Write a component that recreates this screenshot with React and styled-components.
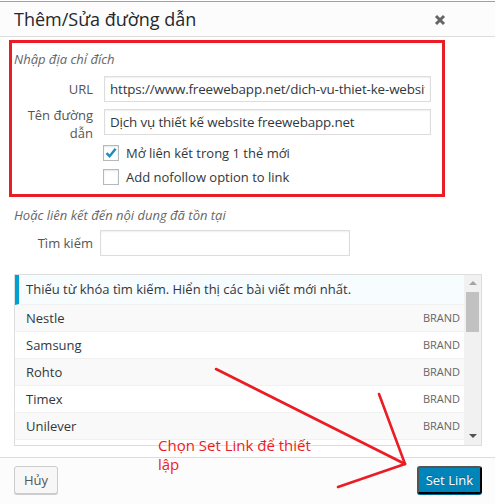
import React from 'react';
import styled, { createGlobalStyle } from 'styled-components';

const GlobalStyle = createGlobalStyle`
  html, body { margin: 0; padding: 0; background: #fff; }
  body { font-family: "Open Sans", "Noto Sans", sans-serif; color: #32373c; }
  * { box-sizing: border-box; }
`;

const links = [
  { title: 'Nestle', info: 'Brand' },
  { title: 'Samsung', info: 'Brand' },
  { title: 'Rohto', info: 'Brand' },
  { title: 'Timex', info: 'Brand' },
  { title: 'Unilever', info: 'Brand' },
  { title: '', info: '' },
];

function App() {
  return (
    <>
      <GlobalStyle />
      <Modal>
        <Header>
          <Title>Thêm/Sửa đường dẫn</Title>
          <CloseBtn aria-label="Close">
            <svg width="12" height="12" viewBox="0 0 12 12">
              <path d="M2 2 L10 10 M10 2 L2 10" stroke="#666" strokeWidth="3" strokeLinecap="butt" />
            </svg>
          </CloseBtn>
        </Header>

        <Body>
          <Highlight>
            <Hint>Nhập địa chỉ đích</Hint>
            <Field>
              <Label>URL</Label>
              <TextInput readOnly value="https://www.freewebapp.net/dich-vu-thiet-ke-website" />
            </Field>
            <Field $tall>
              <Label $wrap>Tên đường<br />dẫn</Label>
              <TextInput readOnly value="Dịch vụ thiết kế website freewebapp.net" />
            </Field>
            <CheckRow $first>
              <Box>
                <svg width="14" height="14" viewBox="0 0 14 14">
                  <path d="M2.5 7.2 L5.6 10.2 L11.6 2.8" fill="none" stroke="#1e8cbe" strokeWidth="2.4" />
                </svg>
              </Box>
              Mở liên kết trong 1 thẻ mới
            </CheckRow>
            <CheckRow>
              <Box />
              Add nofollow option to link
            </CheckRow>
          </Highlight>

          <Hint $outside>Hoặc liên kết đến nội dung đã tồn tại</Hint>
          <SearchField>
            <Label>Tìm kiếm</Label>
            <SearchInput />
          </SearchField>

          <Results>
            <ResultList>
              <Notice>Thiếu từ khóa tìm kiếm. Hiển thị các bài viết mới nhất.</Notice>
              {links.map((l, i) => (
                <Item key={i} $alt={i % 2 === 0}>
                  <span>{l.title}</span>
                  <ItemInfo>{l.info}</ItemInfo>
                </Item>
              ))}
            </ResultList>
            <Scrollbar>
              <Arrow $up />
              <Track>
                <Thumb />
              </Track>
              <Arrow />
            </Scrollbar>
          </Results>
        </Body>

        <Footer>
          <Button>Hủy</Button>
          <Button primary>Set Link</Button>
        </Footer>

        <Note>Chọn Set Link để thiết lập</Note>
        <Marks width="495" height="504" viewBox="0 0 495 504">
          <g stroke="#ea1c24" strokeWidth="2.6" strokeLinecap="round" fill="none">
            <path d="M216 368 L405 463" />
            <path d="M379 393 L405 463" />
            <path d="M405 463 L338 486" />
          </g>
        </Marks>
      </Modal>
    </>
  );
}

const Modal = styled.div`
  position: relative;
  width: 495px;
  height: 504px;
  display: flex;
  flex-direction: column;
  border-top: 1px solid #fff;
  overflow: hidden;
`;

const Header = styled.div`
  height: 36px;
  display: flex;
  align-items: center;
  justify-content: space-between;
  padding: 0 49px 0 14px;
  background: #fcfcfc;
  border-top: 1px solid #7ea6dd;
  border-bottom: 1px solid #ddd;
`;

const Title = styled.h1`
  margin: 0;
  font-size: 18px;
  font-weight: 500;
  color: #23282d;
`;

const CloseBtn = styled.span`
  display: flex;
  margin-top: 2px;
`;

const Body = styled.div`
  flex: 1;
  padding: 3px 13px 0 9px;
  display: flex;
  flex-direction: column;
`;

const Highlight = styled.div`
  width: 436px;
  height: 157px;
  border: 3px solid #ea1c24;
  padding: 7px 0 0 2px;
`;

const Hint = styled.div`
  font-size: 13px;
  font-style: italic;
  color: #666;
  line-height: 18px;
  margin: ${p => (p.$outside ? '9px 0 0 5px' : '0 0 8px')};
`;

const Field = styled.div`
  display: grid;
  grid-template-columns: 81px 327px;
  column-gap: 11px;
  align-items: ${p => (p.$tall ? 'start' : 'center')};
  margin: 0 0 7px -2px;
`;

const Label = styled.label`
  text-align: right;
  font-size: 13px;
  line-height: 18px;
  color: #555;
  margin: ${p => (p.$wrap ? '-3px 0 -10px' : '0')};
`;

const TextInput = styled.input`
  height: 26px;
  width: 100%;
  border: 1px solid #ddd;
  box-shadow: inset 0 1px 2px rgba(0, 0, 0, 0.07);
  padding: 0 5px;
  font-family: inherit;
  font-size: 13.4px;
  color: #32373c;
  letter-spacing: -0.15px;
  outline: none;
`;

const CheckRow = styled.label`
  display: flex;
  align-items: center;
  gap: 7px;
  margin: ${p => (p.$first ? '-1px' : '0')} 0 0 89px;
  height: 24px;
  font-size: 13px;
  color: #32373c;
`;

const Box = styled.span`
  width: 16px;
  height: 16px;
  border: 1px solid #b4b9be;
  background: #fff;
  box-shadow: inset 0 1px 2px rgba(0, 0, 0, 0.1);
  display: flex;
  align-items: center;
  justify-content: center;
`;

const SearchField = styled.div`
  display: grid;
  grid-template-columns: 84px 250px;
  column-gap: 7px;
  align-items: center;
  margin-top: 6px;
`;

const SearchInput = styled.input`
  height: 26px;
  border: 1px solid #ddd;
  box-shadow: inset 0 1px 2px rgba(0, 0, 0, 0.07);
  outline: none;
`;

const Results = styled.div`
  margin: 18px 0 0 5px;
  width: 468px;
  height: 172px;
  border: 1px solid #ddd;
  display: flex;
  background: #fff;
`;

const ResultList = styled.div`
  flex: 1;
  overflow: hidden;
`;

const Notice = styled.div`
  height: 30px;
  display: flex;
  align-items: center;
  padding-left: 7px;
  border-left: 4px solid #00a0d2;
  border-bottom: 1px solid #f1f1f1;
  background: #f7fcfe;
  font-size: 13px;
  color: #32373c;
`;

const Item = styled.div`
  height: 27px;
  display: flex;
  align-items: center;
  justify-content: space-between;
  padding: 0 4px 0 11px;
  border-bottom: 1px solid #f1f1f1;
  background: ${p => (p.$alt ? '#f9f9f9' : '#fff')};
  font-size: 13px;
  color: #32373c;
`;

const ItemInfo = styled.span`
  text-transform: uppercase;
  font-size: 11px;
  color: #666;
`;

const Scrollbar = styled.div`
  width: 17px;
  display: flex;
  flex-direction: column;
  background: #f1f1f1;
`;

const Arrow = styled.div`
  height: 17px;
  display: flex;
  align-items: center;
  justify-content: center;
  &::before {
    content: '';
    border-left: 4px solid transparent;
    border-right: 4px solid transparent;
    ${p => (p.$up ? 'border-bottom: 4px solid #a3a3a3;' : 'border-top: 4px solid #505050;')}
  }
`;

const Track = styled.div`
  flex: 1;
  display: flex;
  justify-content: center;
`;

const Thumb = styled.div`
  width: 13px;
  height: 40px;
  background: #c1c1c1;
`;

const Footer = styled.div`
  height: 48px;
  margin-top: 11px;
  display: flex;
  justify-content: space-between;
  align-items: flex-start;
  padding: 8px 13px 0 14px;
  background: #fcfcfc;
  border-top: 1px solid #ddd;
`;

const Button = styled.button`
  height: 28px;
  padding: 0 ${p => (p.primary ? '7px' : '9px')};
  font-family: inherit;
  font-size: 13px;
  border-radius: 3px;
  border: 1px solid ${p => (p.primary ? '#0073aa #006799 #006799' : '#ccc')};
  background: ${p => (p.primary ? '#0085ba' : '#f7f7f7')};
  color: ${p => (p.primary ? '#fff' : '#555')};
  box-shadow: 0 1px 0 ${p => (p.primary ? '#006799' : '#ccc')};
  text-shadow: ${p => (p.primary ? '0 -1px 1px #006799' : 'none')};
`;

const Note = styled.div`
  position: absolute;
  left: 158px;
  top: 435px;
  width: 170px;
  font-size: 15px;
  line-height: 19px;
  color: #ea1c24;
`;

const Marks = styled.svg`
  position: absolute;
  left: 0;
  top: 0;
  pointer-events: none;
`;

export default App;
